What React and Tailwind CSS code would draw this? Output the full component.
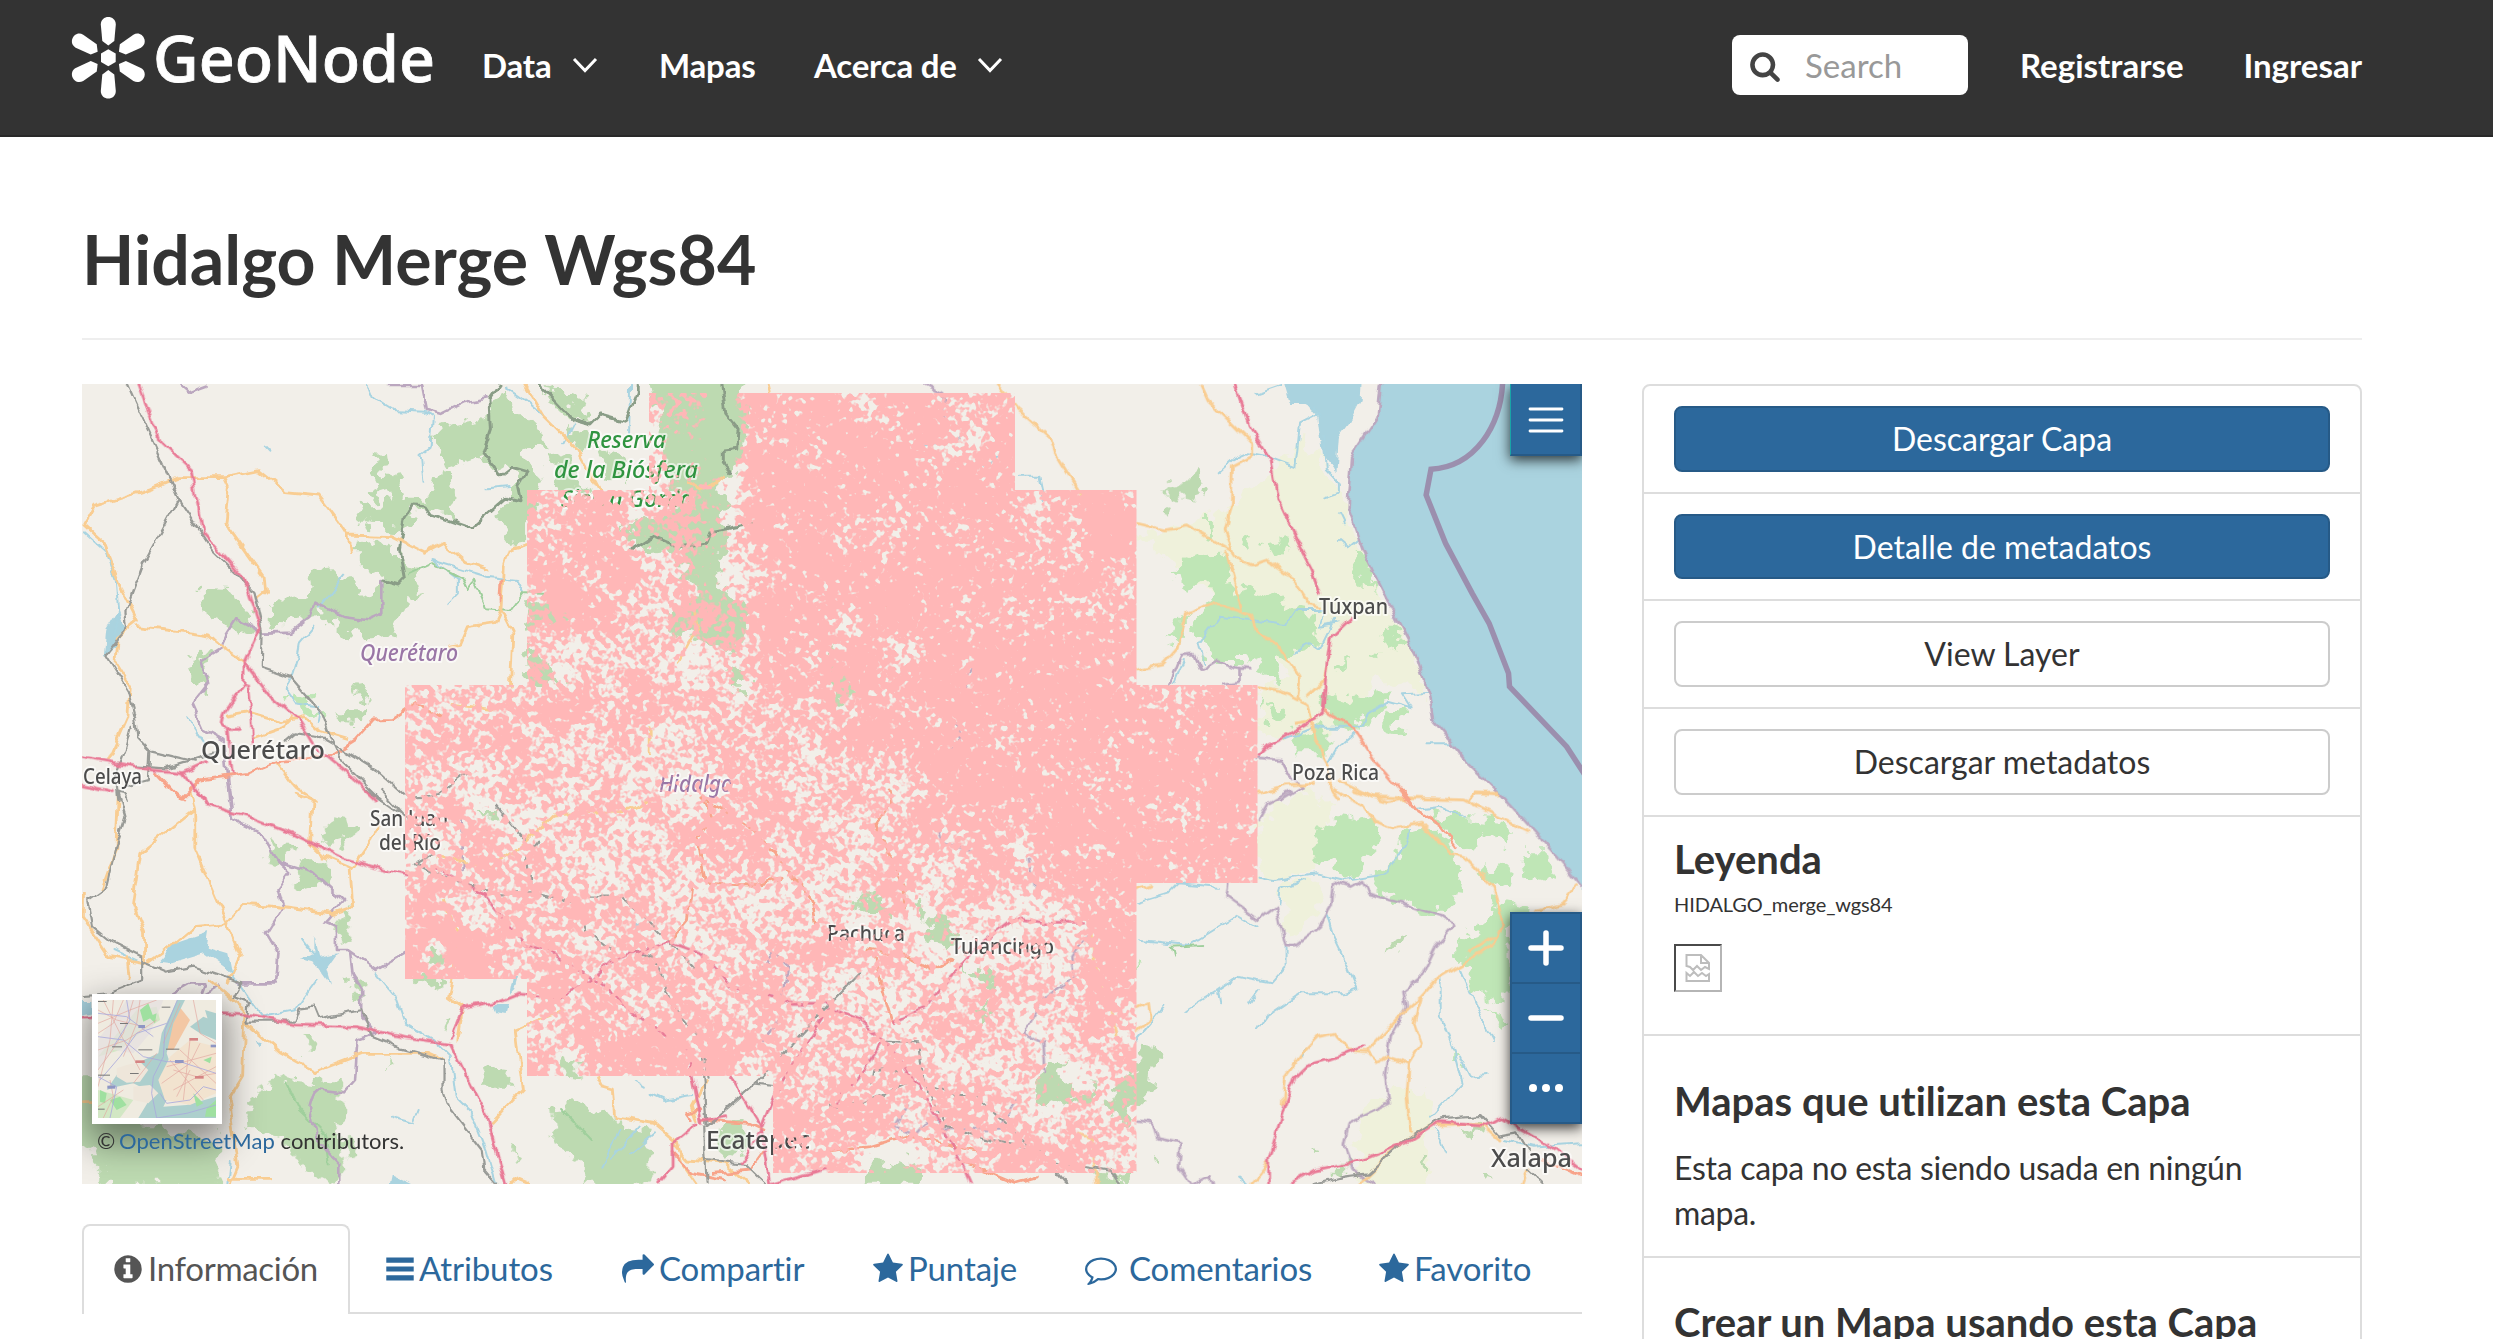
import React from "react";

/* ---------- icons ---------- */
const GLYPHS = {
  search: "M1216 832q0-185-131.5-316.5t-316.5-131.5-316.5 131.5-131.5 316.5 131.5 316.5 316.500 131.500 316.500-131.500 131.500-316.500zm512 832q0 52-38 90t-90 38q-54 0-90-38l-343-342q-179 124-399 124-143 0-273.500-55.500t-225-150-150-225-55.500-273.500 55.500-273.500 150-225 225-150 273.500-55.500 273.500 55.500 225 150 150 225 55.500 273.500q0 220-124 399l343 343q37 37 37 90z",
  info: "M1152 1376v-160q0-14-9-23t-23-9h-96v-512q0-14-9-23t-23-9h-320q-14 0-23 9t-9 23v160q0 14 9 23t23 9h96v320h-96q-14 0-23 9t-9 23v160q0 14 9 23t23 9h448q14 0 23-9t9-23zm-128-896v-160q0-14-9-23t-23-9h-192q-14 0-23 9t-9 23v160q0 14 9 23t23 9h192q14 0 23-9t9-23zm640 416q0 209-103 385.500t-279.500 279.500-385.500 103-385.500-103-279.500-279.500-103-385.500 103-385.500 279.500-279.500 385.500-103 385.500 103 279.500 279.500 103 385.500z",
  bars: "M128 256h1536v288h-1536zM128 752h1536v288h-1536zM128 1248h1536v288h-1536z",
  share: "M1792 640q0 26-19 45l-512 512q-19 19-45 19t-45-19-19-45v-256h-224q-98 0-175.500 6t-154 21.500-133 42.500-105.500 69.500-80 101-48.500 138.500-17.500 181q0 55 5 123 0 6 2.500 23.500t2.500 26.500q0 15-8.500 25t-23.500 10q-16 0-28-17-7-9-13-22t-13.500-30-10.500-24q-127-285-127-451 0-199 53-333 162-403 875-403h224v-256q0-26 19-45t45-19 45 19l512 512q19 19 19 45z",
  star: "M1728 647q0 22-26 48l-363 354 86 500q1 7 1 20 0 21-10.500 35.500t-30.500 14.500q-19 0-40-12l-449-236-449 236q-22 12-40 12-21 0-31.500-14.500t-10.500-35.500q0-6 2-20l86-500-364-354q-25-27-25-48 0-37 56-46l502-73 225-455q19-41 49-41t49 41l225 455 502 73q56 9 56 46z",
  comment: "M896 384q-204 0-381.500 69.500t-282 187.500-104.500 255q0 112 71.500 213.500t201.500 175.500l87 50-27 96q-24 91-70 172 152-63 275-171l43-38 57 6q69 8 130 8 204 0 381.500-69.500t282-187.500 104.500-255-104.500-255-282-187.500-381.500-69.500zm896 512q0 174-120 321.500t-326 233-450 85.500q-70 0-145-8-198 175-460 242-49 14-114 22h-5q-15 0-27-10.500t-16-27.500v-1q-3-4-.5-12t2-10 4.500-9.500l6-9 7-8.500 8-9q7-8 31-34.500t34.500-38 31-39.500 32.500-51 27-59 26-76q-157-89-247.500-220t-90.500-281q0-174 120-321.500t326-233 450-85.500 450 85.500 326 233 120 321.500z",
};
function Glyph({ name, className = "" }) {
  return (
    <svg viewBox="0 0 1792 1792" className={`size-8 shrink-0 ${className}`} fill="currentColor">
      <path d={GLYPHS[name]} />
    </svg>
  );
}
function Chevron() {
  return (
    <svg viewBox="0 0 26 16" className="h-4 w-[26px]" fill="none" stroke="currentColor" strokeWidth="3">
      <path d="M2 2 13 13.500 24 2" />
    </svg>
  );
}
function Logo() {
  return (
    <svg viewBox="0 0 400 100" className="h-[100px] w-[400px] shrink-0" fill="#fff">
      {[0, 60, 120, 180, 240, 300].map((a) => (
        <path key={a} transform={`rotate(${a} 48.300 47.800)`} d="M40.800 14.500C40.800 4.500 55.800 4.500 55.800 14.500L54.300 31 48.300 35.500 42.300 31Z" />
      ))}
      <path d="M48.300 39.300 55.700 43.500V52L48.300 56.300 41 52V43.500Z" />
      <text x="93" y="71.500" textLength="282" lengthAdjust="spacingAndGlyphs" stroke="#fff" strokeWidth=".8" className="font-['Noto_Sans',sans-serif] text-[63px] font-medium">GeoNode</text>
    </svg>
  );
}

/* ---------- map geometry, one tile per quadrant ---------- */
const TILES = [
  {
    t: "translate(-2 -4) scale(.47831 .33333)",
    green: "M875 40 915 85 960 150 980 205 930 200 965 320 935 400 935 490 905 495 865 415 915 350 905 265 880 285 845 230 760 270 745 200 742 140 800 120 845 115ZM745 270 780 300 785 400 700 385 690 450 600 440 583 375 650 370 610 330 625 290 600 215 635 220 640 280 672 300 680 350 730 350ZM585 505 650 485 665 540 700 560 718 665 680 660 650 770 600 780 540 760 500 700 450 715 440 742 398 740 400 680 440 645 480 640 490 570 530 565 570 600 580 650 620 640 635 600 585 560ZM250 635 320 640 345 690 375 750 340 780 300 730 262 710ZM225 825 275 810 262 860 268 925 240 910 220 860ZM570 915 590 912 605 965 575 950ZM540 985 590 985 590 1018 550 1015ZM960 12 1010 50 1050 60 1070 125 1030 120 990 70ZM1020 140 1060 150 1070 200 1050 220ZM980 225 1010 220 1040 310 1060 330 1010 350ZM1080 190 1130 230 1140 320 1100 270ZM1190 0 1390 0 1395 110 1380 250 1345 300 1350 460 1330 600 1390 680 1390 730 1370 820 1330 790 1250 760 1240 700 1290 640 1260 590 1260 500 1170 520 1140 430 1250 400 1240 330 1215 250 1200 100ZM930 670 1010 670 1050 720 940 740ZM930 780 960 820 1000 890 1010 915 935 900ZM1360 860 1390 880 1390 930 1360 920Z",
    light: "M435 930 480 940 505 1030 430 960Z",
    lake: "M55 750 80 690 95 740 75 800 50 830Z",
    river: "M600 15 610 50 655 90 720 95 738 110 733 200 712 225 718 305M735 540 790 600 790 640 770 670M735 540 850 590 910 600 925 640M890 20 930 60 970 110M550 590 500 680M490 740 460 790 455 830 445 880 430 930 450 970 500 980 495 1020M8 460 55 520 75 600 80 700 70 760M850 325 900 318M390 200 400 215M225 1015 265 1100M1150 20 1148 160M1010 190 1030 130",
    faint: "M690 580 735 550 800 600 810 630 825 600 850 685 900 690 925 640M930 640 1050 645",
    orange: "M205 293 150 325 30 380 8 435 50 490 90 640 120 725 80 770 75 850 105 920 100 1010 60 1140M205 293 300 293 375 272 430 335 500 345 540 420 560 465 650 470 720 520 760 490 805 545 855 570M300 293 312 330 305 430 385 590 388 635 370 655M560 465 565 518M120 740 180 750 270 768 300 805 345 845M930 12 970 110 1040 210 1090 340M945 490 895 510 885 560 880 690 905 760 900 915M880 690 868 728 810 740 795 790 775 795M310 1005 350 995 420 1025 470 1010 500 1050 560 1075M360 1075 430 1040 440 1010M410 1145 450 1220 490 1260M1270 300 1300 330 1350 290M1440 10 1445 40M780 970 860 985 905 975M1280 650 1290 740 1250 850M1190 1040 1190 1120",
    salmon: "M250 1200 350 1180 410 1145 520 1130 575 1080 612 1020 650 1018 700 970 755 1010M160 1180 210 1258 250 1200M880 600 878 660",
    pink: "M123 12 168 185 232 270 258 460 345 600 378 745 345 845 400 950 455 1015 490 1100 560 1180 620 1260M345 845 345 910 300 1000 295 1030 310 1050 318 1180M350 915 362 1090M4 1133 150 1170 215 1178 265 1145M215 1178 260 1260M4 1215 70 1235M310 1045 335 1045",
    gray: "M98 12 205 355 275 510 330 585 365 640 382 750 380 860 440 890 505 1000 520 1060 550 1150 630 1260M205 360 130 560 95 695 98 740 55 825 100 930 115 1010 120 1070 150 1115 240 1145M108 1040 95 1110 75 1190 80 1260M145 1110 142 1200 100 1215M430 1085 450 1060 500 1068 540 1100 620 1170 690 1260M120 1160 180 1165 280 1120 M690 1250 750 1245 810 1180",
    purple: "M630 600 630 700 600 718 550 708 490 665 480 710 440 755 385 758 330 715 305 770 295 805 255 840 268 910 235 970 260 1050 300 1080 312 1260M640 15 715 15 725 90 755 102 800 70 850 55M210 15 225 35 265 14",
    border: "M878 12 855 60 858 150 843 215 880 290 905 262 935 275 915 320 922 365 890 355 820 445 730 400 720 378 695 375 680 410 670 510 680 590 665 612 635 600M960 12 1030 120 1070 135 1090 105 1140 125 1165 40 1165 12M1342 12 1350 100 1378 150 1375 205 1345 210 1345 250 1360 275M1150 515 1200 470 1250 500 1310 490 1320 455 1410 430",
  },
  {
    t: "translate(748 -4) scale(.48467 .33333)",
    pale: "M640 460 720 440 820 400 900 280 980 180 1040 300 1080 460 1130 640 1200 810 1240 940 1130 900 1040 1060 900 1080 882 920 960 880 700 540Z",
    sea: "M1137 0 1137 12 1130 110 1075 230 1068 380 1100 510 1150 660 1210 830 1235 940 1245 1020 1310 1140 1395 1260 1570 1260 1570 0ZM935 0 1097 0 1095 60 1070 130 1050 170 1045 280 1015 220 1005 100 975 75 950 75Z",
    green: "M685 325 730 310 760 265 770 310 750 365 700 350ZM695 385 710 380 705 410 695 405ZM0 790 20 850 40 900 60 950 20 960 0 900Z",
    light: "M700 580 740 545 790 530 820 540 830 640 870 620 930 650 950 690 1005 700 1000 800 940 820 900 880 850 840 780 840 750 770 760 690 785 660 780 590 740 620ZM1140 755 1170 755 1190 800 1150 810ZM1030 940 1060 970 1150 930 1150 970 1110 1000 1090 1045 1045 1030 1020 970ZM1150 980 1180 990 1175 1070 1150 1060ZM905 970 940 990 945 1030 910 1020ZM945 1060 1020 1040 1020 1120 960 1120ZM730 700 730 790 695 780ZM850 490 880 470 860 510ZM900 480 925 475 940 530 910 510ZM780 420 790 420 790 455 780 450ZM1080 520 1110 540 1130 650 1095 600ZM1040 850 1070 850 1040 880ZM1120 815 1140 820 1130 840ZM880 850 910 850 940 900 920 910ZM882 940 892 960 884 1000Z",
    river: "M800 280 830 240 860 220 900 230 960 262 970 130 1010 100 1000 80M1020 170 1025 270 1050 310 1050 340 1020 355M770 850 760 790 800 710 870 720 940 735 960 690 1020 690 1010 740 1050 730M960 820 990 790 1010 810 1040 720M1240 935 1180 940 1200 985 1150 965 1110 1000 1100 1040 1000 1040 940 1075M390 290 430 290 440 360M1230 1090 1280 1090M1030 1150 1045 1110 1085 1060M1050 400 1060 430M1050 480 1070 505 1090 480M710 910 730 840M180 200 270 170M270 280 350 230M880 40 930 15",
    faint: "",
    orange: "M765 12 780 60 815 110 870 190 870 230 830 260 828 370 815 450 835 530 870 555 900 540 950 590 990 675 1010 680M345 12 385 85 455 175 465 220 520 350M632 430 690 450 740 438 830 515M818 520 850 695M632 870 685 855 718 800 735 700 790 670 870 705 880 760 920 790 970 890 965 950 985 975 1000 1080 1030 1160 1030 1220 1050 1260M882 920 930 935 965 960M985 945 1020 900 1025 860M960 1030 1000 1020M882 1240 940 1215 1000 1210M1050 1200 1120 1250 1200 1255M1320 1260 1330 1240 1380 1245",
    salmon: "M1018 990 1085 1050 1130 1150 1195 1260M120 660 115 730",
    pink: "M835 12 865 140 910 240 925 360 970 500 995 570 1012 640M1075 715 1032 775 1025 850 1018 990 1000 1020 900 1100 882 1125",
    gray: "",
    purple: "M882 1133 930 1140 945 1180 975 1220 930 1260M700 915 725 825 750 822 765 870 800 840 845 865 865 867M845 865 845 905 810 912M1137 12 1130 110 1075 230 1068 380 1100 510 1150 660 1210 830 1235 940 1245 1020 1310 1140 1395 1260M195 12 230 40 240 130M300 850 270 930M260 1030 270 1100 240 1120 230 1190",
    border: "",
  },
  {
    t: "translate(-2 406) scale(.47831 .33333)",
    green: "M510 120 540 85 570 95 565 150 530 165ZM390 160 460 165 440 200 400 215ZM465 205 510 205 520 280 470 305 445 280ZM548 375 568 370 560 450 540 430ZM565 540 610 590 600 625 565 610ZM690 560 770 565 740 595 700 585ZM735 455 755 460 752 530 725 515ZM840 840 910 850 900 890 840 890ZM470 750 495 750 495 785 470 785ZM985 955 1040 945 1120 980 1130 1010 1200 1020 1180 1190 1060 1190 1060 1130 990 1060ZM370 900 440 865 550 880 545 960 560 1100 540 1190 470 1140 430 1050 360 1020 340 960ZM-10 850 30 850 30 960 130 1010 300 1050 290 1190 40 1190 40 1090 -10 1060ZM820 60 870 60 875 95ZM1010 810 1040 800 1045 870 1005 860ZM755 695 768 700 762 720ZM640 800 655 810 645 840ZM905 1075 920 1080 912 1110ZM1340 1010 1380 1000 1390 1090 1350 1100Z",
    light: "",
    lake: "M490 440 500 500 540 490 515 540 525 590 490 520 465 510 490 490ZM165 515 200 460 270 425 265 470 310 490 318 550 260 490 190 520ZM908 555 918 560 910 600 900 615ZM865 645 895 645 890 675 870 670ZM1330 790 1350 800 1345 835ZM650 1155 705 1190 645 1190ZM370 755 382 760 375 775ZM-5 630 30 630 30 670 -5 680ZM1160 390 1170 400 1162 430Z",
    river: "M460 440 500 510M620 550 660 620 680 700 740 750 775 800 785 920 820 970 850 1080 870 1182M495 570 450 660 380 680 340 600 310 540M1190 910 1220 930 1280 915M650 980 700 1000 710 960M1130 1020 1090 1130M1170 1010 1110 1110M1200 1030 1150 1090M310 1182 315 1110M1160 870 1185 890M70 480 130 520",
    faint: "M430 870 460 960 510 1030 520 1120M1010 960 1070 1050",
    orange: "M230 0 240 60 240 170 300 370 310 400 240 410 190 470 140 520 60 500 5 380 5 310M80 12 75 180 45 300M240 60 125 190 110 340 135 430 135 520M450 10 485 30 480 160 510 200 565 235M570 350 565 240 610 150 625 110M570 350 530 370 400 345 340 340 305 400 335 500 310 580M270 570 345 660 340 860 310 930 330 1130 315 1182M345 695 420 790 490 845 590 790 730 790 760 810M780 560 770 620 800 650 790 750M1080 860 1090 890 1115 900 1120 980 1200 1000 1250 1060 1260 1120 1290 1182M750 200 860 230 930 160 990 75 1150 60 1190 30M1010 660 910 720 925 900 860 1000M760 330 790 430 780 560M1240 1060 1270 1110 1350 1120 1400 1182M1310 870 1280 950 1290 990M5 935 25 935M310 1165 400 1165M105 560 100 500M900 1182 910 1165 940 1182",
    salmon: "M1300 20 1320 80 1290 150 1305 280 1400 285 1470 265M1310 30 1400 110 1480 240 1530 330 1540 400M190 0 215 30M1235 450 1270 390 1280 280M1300 990 1400 1000 1430 1020M1320 1150 1400 1140 1430 1080M1240 1090 1280 1150 1350 1170M1280 990 1270 970 1300 960",
    pink: "M245 0 265 45 350 80 450 135 550 205 620 235 685 258M840 310 890 400 930 465 980 480 1075 570 1190 700 1270 780 1300 1000M-5 685 60 680 295 668 350 672 450 705 580 710 650 735 740 755 780 765M775 745 800 655 880 635 920 612 1000 625 1070 570 1110 515 1235 455 1300 490 1360 590 1430 612 1490 640 1568 640M775 765 850 980 890 1182M1360 860 1425 1010 1450 920 1568 650M1300 990 1350 980M1290 1000 1240 1060 1240 1130 1210 1182M1425 1020 1440 1182M1425 1025 1380 1120M1440 1182 1568 1130M740 230 850 320",
    gray: "M100 30 95 10 80 5 95 80 75 170 55 290 15 330 25 410 60 450 130 500 130 570 60 610 10 615M130 515 180 545 240 530 290 555 335 580 320 620 355 640 350 695 450 695 460 655 490 650 500 685 590 660 610 740 670 775 760 810 760 900 775 960 840 1080 845 1140 870 1182M600 0 690 90M630 0 680 80M700 220 740 250 860 310 960 310 1040 340 1060 420 1110 480M940 290 935 200 960 155M870 50 905 110 930 150M1060 320 1130 320 1180 380 1230 450 1290 540M1150 480 1200 500 1240 650 1300 750 1312 860M1300 790 1310 1010 1420 870 1568 640M1305 1010 1310 1182M1310 1110 1390 1125 1430 1182M1410 880 1450 888M700 220 740 190",
    purple: "M312 0 320 90 380 130 410 210 440 250 415 300 425 350 390 430 415 490 410 580 330 580M420 220 490 250 550 330 510 395 535 410 535 480 560 480 620 540 680 490M565 490 570 550 590 600 590 680 620 730 580 750 575 870 550 910 490 900 480 950 495 1050 540 1120 540 1182M150 620 180 620 230 580 260 580 250 620 290 590M800 240 800 60M1430 750 1470 680M1410 570 1450 490 1480 530 1470 620",
    border: "",
  },
  {
    t: "translate(748 406) scale(.48467 .33333)",
    pale: "M882 100 960 10 1030 30 1000 250 890 260ZM930 280 1020 270 990 420 950 440ZM1100 960 1150 900 1240 900 1230 1190 1100 1190 1080 1060Z",
    sea: "M1375 0 1410 55 1500 200 1551 290 1570 330 1570 0Z",
    green: "M645 755 675 765 660 915 600 1000 580 960 600 860 630 830ZM440 800 480 810 490 930 550 870 540 930 480 960 430 930ZM40 330 100 320 130 360 80 360ZM160 335 190 340 200 380ZM200 380 250 390 260 440 230 490 195 450ZM270 540 320 540 355 600 290 570ZM300 650 330 650 315 710ZM60 1190 120 1110 190 1130 200 1190ZM1290 1010 1340 1020 1335 1060ZM550 460 565 465 560 500ZM1210 1100 1230 1105 1220 1130ZM995 1075 1008 1080 1000 1095ZM675 1100 685 1115 678 1130ZM550 1150 620 1160 600 1190 550 1190ZM1040 1130 1070 1130 1060 1160ZM1345 1160 1370 1170 1350 1190ZM1165 450 1185 440 1170 480 1150 500Z",
    light: "M1050 75 1120 90 1130 170 1080 260 1030 220 990 200 1005 110ZM1180 130 1230 105 1280 150 1300 230 1290 330 1250 375 1110 310 1120 270 1170 200ZM1240 70 1290 80 1400 90 1410 160 1350 130 1330 190 1290 150ZM1350 210 1400 240 1390 290 1350 260ZM1290 450 1400 400 1400 650 1320 600 1310 520ZM1370 330 1440 350 1400 440 1340 440ZM1430 190 1480 190 1500 270 1440 250ZM1360 660 1400 690 1390 720ZM1280 460 1310 460 1300 510ZM632 500 645 510 636 540ZM1290 790 1305 820 1290 830Z",
    river: "M632 340 700 310 720 280 800 290M640 450 740 465 840 375 880 410M735 660 800 600 840 560 910 580 940 530 940 470M800 600 805 640M865 640 885 600M880 720 900 680 970 610 1060 610 1088 595 1060 500 1040 440 1025 370M882 260 920 270 1000 250 1060 270 1150 250 1180 180 1200 120M925 340 930 300 980 270M632 750 690 650M1260 570 1260 680 1290 790 1305 880 1240 980M1300 540 1330 640 1370 750M1250 1020 1270 1090M1210 60 1260 50 1310 80M1300 800 1320 860 1355 855M1390 1050 1450 1070 1551 1060M840 1160 860 1182M980 780 975 800",
    faint: "M710 500 705 470 770 465",
    orange: "M1040 0 1100 50 1120 90 1160 115 1220 100 1280 190 1310 200 1370 290 1390 400 1370 460 1310 520 1250 570 1220 620 1180 670 1110 780M1080 0 1150 35 1200 25 1310 30 1440 125M1320 30 1330 10 1380 10M1220 620 1205 700 1220 760 1195 820 1150 800 1130 815 1110 785M1195 820 1190 920 1198 1030M1110 785 1070 780 1040 730 1010 740 970 800 940 860 935 940M905 1120 870 1182M1090 1182 1160 1080 1240 1005 1340 1000 1380 1050M632 720 660 690 655 635 632 650M632 300 660 285M1460 360 1510 340 1540 290M535 420 555 560 580 640 590 740M510 1030 540 1040 550 1182M1320 480 1370 440M1430 1182 1440 1140",
    salmon: "M1180 0 1215 70 1260 110 1290 170M120 0 125 40 95 100 120 200 155 290 155 350M80 480 160 500 210 540 250 510M90 500 130 700M0 1085 80 1070 160 1035 300 1080M280 1120 380 1180 430 1160M1470 1110 1551 1160",
    pink: "M905 1182 905 1110 935 960 960 860 985 825 1050 800 1100 770M950 1182 1000 1140 1100 1110 1200 1050 1260 995 1350 1005 1380 980 1430 1020 1500 1080 1551 1140M130 700 200 650 250 560 320 450 380 385 450 400 520 400M0 655 60 690 110 750 170 860 260 1080 290 1182M110 750 60 860 0 960",
    gray: "M110 755 180 760 195 880 240 1010 300 1040 430 1080 490 1182M195 880 260 915 300 915 440 1110 580 1140 600 1182M0 950 70 940 160 880M85 880 90 840 130 835 170 860M1000 1182 1060 1160 1110 1150 1180 1060 1260 985 1340 975 1380 1040 1420 1030 1440 1080M0 640 60 550M1440 1140 1470 1182",
    purple: "M822 280 818 320 885 390 920 350 940 465 960 465 1010 410 1035 350 1040 275 1075 290 1100 270 1110 310 1265 380 1290 405 1250 470 1220 560 1185 600 1190 650 1155 740 1145 860 1155 940 1070 1000 1060 1070 1080 1140 1120 1182M632 995 665 1000 675 1045 725 1060 720 1130 745 1182M750 1182 785 1155 790 1182M885 90 905 40 950 5M220 100 235 160 290 180M540 420 500 500 505 560 440 630 400 730 440 760 445 850M160 940 130 1010 180 1030 210 980 240 1020 350 1015 390 920M1375 0 1410 55 1500 200 1551 290M410 200 425 310",
    border: "",
  },
];
const AREAS = [["pale", "#eff1db"], ["light", "#bfe6b6"], ["green", "#bddab1"], ["sea", "#aad3df"], ["lake", "#aad3df"]];
const LINES = [
  ["river", "#a9d4e1", 2],
  ["faint", "#9fcf9c", 2],
  ["purple", "#bba7bf", 2.6],
  ["border", "#8a9d87", 3],
  ["orange", "#f9cd92", 2.8],
  ["salmon", "#f8a48a", 2.8],
  ["gray", "#999b97", 2.2],
  ["pink", "#e97a96", 2.8],
];

/* gray level is point density: white = solid, dark = sparse */
const DENSITY = [
  [520, 420, 120, 60, "#8c8c8c"], [640, 500, 130, 50, "#868686"], [905, 560, 110, 50, "#888"], [700, 620, 130, 40, "#929292"],
  [960, 690, 60, 70, "#8a8a8a"], [820, 640, 70, 50, "#868686"], [600, 280, 36, 46, "#868686"], [590, 370, 40, 30, "#8e8e8e"],
  [605, 60, 48, 52, "#707070"], [640, 50, 20, 60, "#303030"], [635, 130, 22, 42, "#606060"], [625, 190, 22, 26, "#6c6c6c"], [575, 160, 18, 14, "#555"],
  [650, 220, 18, 36, "#6e6e6e"], [475, 285, 16, 16, "#6a6a6a"], [470, 228, 24, 10, "#7a7a7a"], [655, 300, 8, 14, "#5c5c5c"],
  [360, 570, 55, 30, "#c8c8c8"], [354, 570, 8, 14, "#222"], [500, 180, 50, 60, "#b8b8b8"], [580, 672, 90, 20, "#c0c0c0"], [490, 682, 10, 14, "#444"],
  [350, 320, 20, 10, "#888"], [500, 330, 60, 14, "#b0b0b0"], [612, 402, 44, 12, "#747474"], [640, 450, 50, 24, "#acacac"], [785, 550, 44, 12, "#6c6c6c"], [850, 548, 18, 20, "#444"],
  [920, 564, 56, 12, "#707070"], [890, 592, 22, 12, "#555"], [970, 698, 16, 30, "#555"], [1034, 712, 14, 34, "#666"], [784, 520, 24, 10, "#5c5c5c"], [700, 755, 30, 16, "#888"],
  [805, 775, 36, 16, "#444"], [345, 462, 30, 16, "#808080"], [340, 436, 30, 12, "#848484"], [720, 740, 40, 40, "#a8a8a8"], [405, 428, 14, 10, "#555"],
];
const VOIDS = [
  [880, 58, 28, 16, "#808080"], [955, 120, 10, 14, "#6c6c6c"], [963, 150, 8, 30, "#767676"], [995, 150, 8, 20, "#6c6c6c"], [820, 262, 22, 12, "#848484"],
  [780, 24, 12, 20, "#7c7c7c"], [905, 22, 30, 8, "#888"], [770, 320, 12, 22, "#747474"], [1040, 220, 14, 30, "#8c8c8c"], [940, 470, 9, 18, "#5c5c5c"], [850, 330, 8, 14, "#747474"], [765, 240, 10, 14, "#7c7c7c"],
  [790, 400, 20, 10, "#888"], [760, 390, 16, 16, "#848484"], [665, 160, 10, 22, "#888"], [1105, 430, 16, 12, "#909090"],
];
const FOOTPRINT = "M567 9H933V106H1054.500V301H1175.500V499H1054.500V789H691V692H445V595H323V301H445V106H567Z";

const LABELS = [
  ["Reserva", 505, 64, 79, 23, "area"], ["de la Biósfera", 472, 94, 144, 23, "area"], ["Sierra Gorda", 479, 123, 132, 23, "area"],
  ["Querétaro", 278, 277, 98, 23, "state"], ["Hidalgo", 577, 408, 74, 23, "state"],
  ["Querétaro", 119, 375, 124, 26, "city"], ["Celaya", 1, 400, 59, 21, "city"], ["San Juan", 288, 442, 78, 21, "city"], ["del Río", 297, 466, 62, 21, "city"],
  ["Ecatepec", 624, 765, 104, 26, "city"], ["Pachuca", 745, 557, 78, 21, "city"], ["Tulancingo", 869, 570, 103, 21, "city"],
  ["Túxpan", 1237, 230, 69, 21, "city"], ["Poza Rica", 1210, 396, 87, 21, "city"], ["Xalapa", 1409, 783, 81, 26, "city"],
];
const LABEL_STYLE = {
  area: "fill-[#2f9440] italic font-medium",
  state: "fill-[#9a76a6] italic font-medium",
  city: "fill-[#4c4c4c] font-medium",
};

function Terrain() {
  return (
    <svg viewBox="0 0 1500 800" className="block h-[800px] w-[1500px]">
      <defs>
        <filter id="rough" x="0" y="0" width="1500" height="800" filterUnits="userSpaceOnUse" colorInterpolationFilters="sRGB">
          <feTurbulence type="fractalNoise" baseFrequency=".06" numOctaves="3" seed="4" />
          <feDisplacementMap in="SourceGraphic" scale="30" xChannelSelector="R" yChannelSelector="G" />
          <feGaussianBlur stdDeviation=".5" />
        </filter>
        <filter id="wiggle" x="0" y="0" width="1500" height="800" filterUnits="userSpaceOnUse" colorInterpolationFilters="sRGB">
          <feTurbulence type="fractalNoise" baseFrequency=".07" numOctaves="2" seed="9" />
          <feDisplacementMap in="SourceGraphic" scale="9" xChannelSelector="R" yChannelSelector="G" />
          <feGaussianBlur stdDeviation=".5" />
        </filter>
        <filter id="points" x="0" y="0" width="1500" height="800" filterUnits="userSpaceOnUse" colorInterpolationFilters="sRGB">
          <feGaussianBlur in="SourceGraphic" stdDeviation="7" />
          <feColorMatrix values="0 0 0 0 0  0 0 0 0 0  0 0 0 0 0  1 0 0 0 0" result="density" />
          <feTurbulence type="fractalNoise" baseFrequency=".024" numOctaves="3" seed="6" />
          <feColorMatrix values="0 0 0 0 0  0 0 0 0 0  0 0 0 0 0  1 0 0 0 0" result="clumps" />
          <feTurbulence type="fractalNoise" baseFrequency=".15" numOctaves="2" seed="21" />
          <feColorMatrix values="0 0 0 0 0  0 0 0 0 0  0 0 0 0 0  1 0 0 0 0" result="noise" />
          <feComposite in="clumps" in2="noise" operator="arithmetic" k2=".5" k3=".95" k4="-.225" result="grain" />
          <feComposite in="density" in2="grain" operator="arithmetic" k2=".5" k3=".5" />
          <feColorMatrix values="0 0 0 0 1  0 0 0 0 .718  0 0 0 0 .718  0 0 0 18 -8.900" />
        </filter>
        <clipPath id="footprint"><path d={FOOTPRINT} /></clipPath>
      </defs>
      <rect width="1500" height="800" fill="#f2efe9" />
      <g filter="url(#rough)">
        {AREAS.slice(0, 3).map(([k, c]) => TILES.map((q, i) => q[k] && <path key={k + i} d={q[k]} transform={q.t} fill={c} />))}
      </g>
      <g filter="url(#wiggle)">
        {AREAS.slice(3).map(([k, c]) => TILES.map((q, i) => q[k] && <path key={k + i} d={q[k]} transform={q.t} fill={c} />))}
        {LINES.map(([k, c, w]) => TILES.map((q, i) => q[k] && (
          <path key={k + i} d={q[k]} transform={q.t} fill="none" stroke={c} strokeWidth={w} vectorEffect="non-scaling-stroke" strokeLinejoin="round" strokeLinecap="round" />
        )))}
      </g>
      <rect x="1440" width="60" height="400" fill="#aad3df" />
      <path transform={TILES[1].t} d="M1388 0C1385 140 1330 260 1240 268L1230 345 1270 490 1325 640 1360 730 1400 880 1402 920 1520 1100 1560 1190" fill="none" stroke="#9b8fae" strokeWidth="5.500" vectorEffect="non-scaling-stroke" />
      {LABELS.map(([s, x, y, w, size, kind]) => (
        <text key={s + y} x={x} y={y} textLength={w} lengthAdjust="spacingAndGlyphs" fontSize={size} stroke="#fff" strokeOpacity=".6" strokeWidth="4" strokeLinejoin="round" paintOrder="stroke" className={`font-['Noto_Sans',sans-serif] ${LABEL_STYLE[kind]}`}>{s}</text>
      ))}
      <g clipPath="url(#footprint)">
        <g filter="url(#points)">
          <rect width="1500" height="800" fill="#989898" />
          <path d="M640 -20H1200V620H1010L960 500 880 440 850 400 780 350 700 300 670 200Z" fill="#bababa" />
          {[...DENSITY, ...VOIDS].map(([cx, cy, rx, ry, f], i) => <ellipse key={i} cx={cx} cy={cy} rx={rx} ry={ry} fill={f} />)}
        </g>
      </g>
    </svg>
  );
}

function BasemapThumb() {
  return (
    <svg viewBox="24 30 354 354" className="size-full">
      <rect x="0" y="0" width="400" height="400" fill="#efebe0" />
      <path d="M24 200 90 120 140 60 200 50 210 90 150 130 90 180ZM60 310 130 330 90 384 24 384V300Z" fill="#cbe6bd" opacity=".8" />
      <path d="M110 30 220 30 180 130 130 190 70 180 24 240V150Z" fill="#e6dfe0" opacity=".7" />
      <path d="M260 40 300 90 250 180 225 180Z" fill="#f3c7a4" />
      <path d="M262 30H285L250 100 230 190 240 220 215 260 230 330 220 350 290 345 378 320V384H145L190 310 130 280 80 290 50 300 90 240 150 215 205 190 215 130Z" fill="#adcfcd" />
      <path d="M300 110 340 80 378 95V150L330 130ZM345 60 378 70V100L360 110Z" fill="#adcfcd" />
      <path d="M240 200 300 150 378 170V310L300 345 225 330 205 270Z" fill="#f2e3cf" />
      <path d="M80 235 110 225 150 215 175 240 150 275 110 278 80 260ZM130 290 180 285 205 310 175 340 130 330Z" fill="#eee6da" />
      <path d="M150 60 175 40 190 80 160 95ZM310 310 340 340 320 350ZM350 355 378 330V380H345ZM175 80 200 70 195 100ZM60 330 90 320 110 345 80 360ZM30 300 50 310 45 340 30 335ZM340 210 365 200 360 220Z" fill="#9fe0a0" />
      <g fill="none" stroke="#e3a7a0" strokeWidth="2">
        <path d="M24 100 120 60 200 30M40 30 90 130 150 240M24 180 110 150 200 90M24 240 60 190 100 130 130 30M70 30 60 150 24 290M230 230 378 190M240 210 340 330M300 150 280 330M250 300 378 230M220 160 270 40M130 280 200 190M310 30 330 130 378 160M270 180 378 280M24 350 100 300M24 60 80 90 160 110M150 30 140 100 100 200M24 130 70 100 100 30M40 384 70 320 60 270M250 240 320 260 378 250M215 280 300 220 330 160M260 320 300 240" />
      </g>
      <g fill="none" stroke="#a9a9dc" strokeWidth="2.500">
        <path d="M262 30 225 120 220 200 190 260 185 310 200 384M24 140 100 150 160 200 230 215M30 270 90 200 140 130 230 100M60 384 80 290 24 260M230 215 270 215 378 250M200 384 290 370 378 345M110 30 120 90 70 170M24 70 110 80 190 140" />
        <path d="M210 310 230 340 300 330 340 290 378 300" />
      </g>
      <g fill="#8f96c4"><rect x="145" y="105" width="20" height="9" /><rect x="255" y="210" width="26" height="9" /><rect x="52" y="287" width="24" height="9" /><rect x="362" y="164" width="16" height="8" /></g>
      <g fill="#d58484"><rect x="136" y="211" width="28" height="8" /><rect x="298" y="144" width="26" height="8" /><rect x="315" y="258" width="26" height="8" /></g>
      <g fill="#777"><rect x="215" y="50" width="26" height="3" /><rect x="90" y="99" width="24" height="3" /><rect x="66" y="169" width="30" height="3" /><rect x="145" y="178" width="42" height="3" /><rect x="228" y="176" width="40" height="3" /><rect x="120" y="249" width="26" height="3" /><rect x="24" y="254" width="36" height="3" /><rect x="24" y="356" width="20" height="3" /><rect x="24" y="33" width="26" height="3" /></g>
    </svg>
  );
}

function MapPanel() {
  return (
    <div className="relative h-[800px] w-[1500px] overflow-hidden">
      <Terrain />
      <div className="absolute top-0 right-0 flex size-[72px] items-center justify-center border-r-2 border-b-2 border-l border-[#265a87] border-l-[#18a5a7] bg-[#2c689c] pt-[2px] shadow-[0_4px_12px_rgba(0,0,0,.75)]">
        <svg viewBox="0 0 36 26" className="h-[26px] w-9" stroke="#fff" strokeWidth="2.800" strokeLinecap="round"><path d="M2 2H34M2 13H34M2 24H34" /></svg>
      </div>
      <div className="absolute top-[528px] right-0 flex h-[212px] w-[72px] flex-col divide-y-2 divide-[#265a87] border-2 border-[#265a87] bg-[#2c689c] text-white shadow-[0_4px_12px_rgba(0,0,0,.75)]">
        {["M18 3V33M3 18H33", "M3 18H33"].map((d) => (
          <div key={d} className="flex flex-1 items-center justify-center">
            <svg viewBox="0 0 36 36" className="size-9" stroke="currentColor" strokeWidth="5.500" strokeLinecap="round"><path d={d} /></svg>
          </div>
        ))}
        <div className="flex flex-1 items-center justify-center gap-[5px]">
          <i className="size-2 rounded-full bg-white" /><i className="size-2 rounded-full bg-white" /><i className="size-2 rounded-full bg-white" />
        </div>
      </div>
      <div className="absolute top-[610px] left-[10px] size-[130px] border-6 border-white bg-white shadow-[0_14px_34px_4px_rgba(0,0,0,.45)]"><BasemapThumb /></div>
      <p className="absolute top-[744px] left-[15px] text-[22px] leading-[26px] whitespace-nowrap text-[#333]">© <span className="-ml-[2px] tracking-[.1px] text-[#2c689c]">OpenStreetMap</span><span> contributors.</span></p>
    </div>
  );
}

/* ---------- page ---------- */
function Header() {
  return (
    <header className="flex h-[137px] items-start border-b-2 border-[#282828] bg-[#333] pt-[10px] pl-[60px] text-[33px] leading-[40px] font-bold text-white">
      <Logo />
      <nav className="flex pt-[35px] pl-[22px] tracking-[-.2px]">
        <a className="flex w-[177px] items-center gap-[21px]">Data <Chevron /></a>
        <a className="w-[155px]">Mapas</a>
        <a className="flex items-center gap-[20px]">Acerca de <Chevron /></a>
      </nav>
      <div className="mr-[131px] ml-auto flex items-center pt-[25px]">
        <label className="flex h-[60px] w-[236px] items-center rounded-lg bg-white pl-[17px] font-normal text-[#999]">
          <Glyph name="search" className="mt-[2px] text-[#444]" />
          <span className="pl-[24px]">Search</span>
        </label>
        <a className="w-[275px] pl-[52px]">Registrarse</a>
        <a className="w-[119px] text-right">Ingresar</a>
      </div>
    </header>
  );
}

const TABS = [
  ["Atributos", "bars", "w-[232px]", "gap-[3px] pl-[30px]"],
  ["Compartir", "share", "w-[247px]", "gap-[5px] pl-[32px]"],
  ["Puntaje", "star", "w-[208px]", "gap-[4px] pl-[31px]"],
  ["Comentarios", "comment", "w-[290px]", "gap-[12px] pl-[32px]"],
  ["Favorito", "star", "w-[220px]", "gap-[4px] pl-[31px]"],
];
function Tabs() {
  return (
    <ul className="mt-[40px] flex h-[90px] w-[1500px] gap-1 text-[33px] tracking-[-.1px] text-[#2c689c] shadow-[inset_0_-2px_0_#ddd]">
      <li className="flex w-[268px] items-center gap-[4px] rounded-t-lg border-2 border-b-0 border-[#ddd] bg-white pb-[2px] pl-[28px] tracking-[-.3px] text-[#555]">
        <Glyph name="info" /><span>Información</span>
      </li>
      {TABS.map(([label, icon, width, space]) => (
        <li key={label} className={`flex items-center ${width} ${space}`}><Glyph name={icon} /><span>{label}</span></li>
      ))}
    </ul>
  );
}

function Sidebar() {
  const row = "border-b-2 border-[#ddd] px-[30px]";
  const button = "flex w-full items-center justify-center rounded-lg border-2";
  const blue = "border-[#265a87] bg-[#2c689c] text-white";
  const plain = "border-[#ccc] bg-white text-[#333]";
  return (
    <aside className="h-[1000px] w-[720px] rounded-lg border-2 border-[#ddd] text-[32px] text-[#333]">
      <div className={`${row} h-[108px] pt-5`}><button className={`${button} ${blue} h-[66px]`}>Descargar Capa</button></div>
      <div className={`${row} h-[107px] pt-5`}><button className={`${button} ${blue} h-[65px]`}>Detalle de metadatos</button></div>
      <div className={`${row} h-[108px] pt-5`}><button className={`${button} ${plain} h-[66px]`}>View Layer</button></div>
      <div className={`${row} h-[108px] pt-5`}><button className={`${button} ${plain} h-[66px]`}>Descargar metadatos</button></div>
      <section className={`${row} h-[219px] pt-[20px]`}>
        <h4 className="text-[40px] leading-[44px] font-bold">Leyenda</h4>
        <p className="mt-[9px] text-[20px] leading-7 tracking-[-.1px]">HIDALGO_merge_wgs84</p>
        <div className="mt-[26px] flex size-12 items-center justify-center border-2 border-t-[#4a4a4a] border-r-[#b5b5b5] border-b-[#b5b5b5] border-l-[#4a4a4a]">
          <svg viewBox="0 0 26 30" className="h-[30px] w-[26px]" fill="none" stroke="#bdbdbd" strokeWidth="2">
            <path d="M1.500 13V2H16L24 10V16L20 14 16 17 12 13 8 17 5 14ZM16 2V10H24M1.500 28V20L5 23 9 19 13 23 17 20 21 23 24 21V28Z" />
          </svg>
        </div>
      </section>
      <section className={`${row} h-[222px] pt-[43px]`}>
        <h4 className="text-[40px] leading-[44px] font-bold">Mapas que utilizan esta Capa</h4>
        <p className="mt-[22px] leading-[45px] tracking-[-.3px]">Esta capa no esta siendo usada en ningún mapa.</p>
      </section>
      <section className="px-[30px] pt-[42px]">
        <h4 className="text-[40px] leading-[44px] font-bold">Crear un Mapa usando esta Capa</h4>
      </section>
    </aside>
  );
}

export default function App() {
  return (
    <div className="h-[1339px] w-[2493px] overflow-hidden bg-white font-[Lato,sans-serif] [font-variant-ligatures:none]">
      <Header />
      <main className="pl-[82px]">
        <h1 className="h-[203px] w-[2280px] border-b-2 border-[#eee] pt-[81px] text-[68px] leading-[82px] font-bold text-[#333]">Hidalgo Merge Wgs84</h1>
        <div className="mt-[44px] flex gap-[60px]">
          <div>
            <MapPanel />
            <Tabs />
          </div>
          <Sidebar />
        </div>
      </main>
    </div>
  );
}
